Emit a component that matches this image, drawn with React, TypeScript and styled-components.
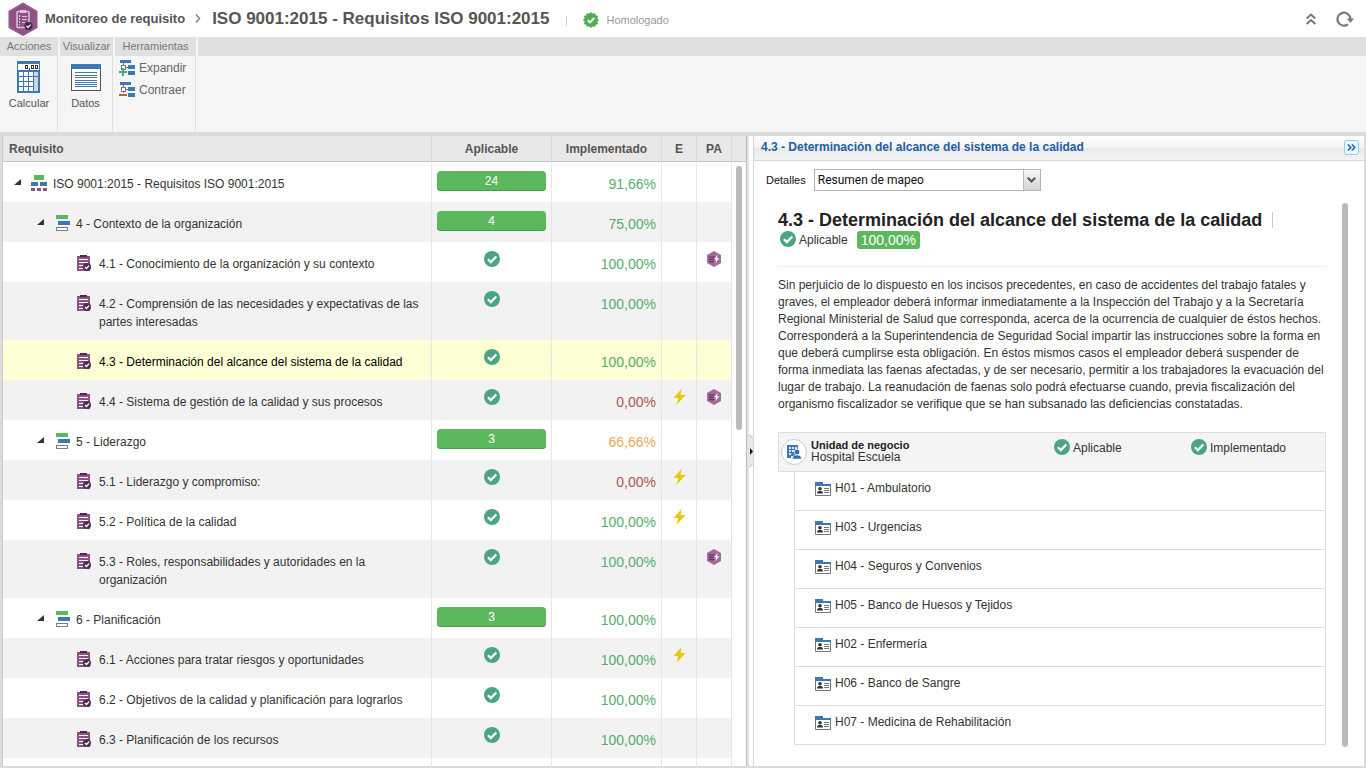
import React from 'react';
import styled, { createGlobalStyle, css } from 'styled-components';

const GlobalStyle = createGlobalStyle`
  *, *::before, *::after { box-sizing: border-box; }
  html, body { margin: 0; padding: 0; }
  body, button, select, table {
    font-family: "Liberation Sans", Arial, sans-serif;
    font-size: 12px;
    color: #333;
  }
  button { margin: 0; padding: 0; border: 0; background: none; cursor: pointer; }
  h1, h2, p, ul { margin: 0; padding: 0; }
  ul { list-style: none; }
  svg { display: block; flex: none; }
`;

/* ---------- Shell ---------- */

const Page = styled.div`
  display: flex;
  flex-direction: column;
  height: 100vh;
  background: #fff;
  overflow: hidden;
`;

const Workspace = styled.main`
  flex: 1;
  min-height: 0;
  display: grid;
  grid-template-columns: minmax(0, 745fr) 6px minmax(0, 611fr);
  grid-template-rows: minmax(0, 1fr);
  border: 2px solid #dcdcdc;
  border-top-width: 4px;
`;

/* ---------- Title bar ---------- */

const TitleBar = styled.header`
  flex: none;
  display: flex;
  align-items: center;
  height: 37px;
  padding: 0 12px 0 8px;
`;

const Crumb = styled.a`
  margin-left: 7px;
  font-size: 13px;
  font-weight: bold;
  color: #555;
  text-decoration: none;
`;

const CrumbArrow = styled.span`
  display: flex;
  margin: 0 11px 0 10px;
`;

const PageTitle = styled.h1`
  font-size: 17px;
  line-height: 20px;
  font-weight: bold;
  color: #555;
  white-space: nowrap;
`;

const Divider = styled.span`
  width: 1px;
  height: 10px;
  margin: 4px 16px 0 17px;
  background: #ccc;
`;

const Status = styled.span`
  display: flex;
  align-items: center;
  gap: 7px;
  padding-top: 3px;
  font-size: 11px;
  color: #999;
`;

const TitleActions = styled.div`
  display: flex;
  align-items: center;
  gap: 20px;
  margin-left: auto;
`;

/* ---------- Ribbon ---------- */

const Ribbon = styled.nav`
  flex: none;
  display: flex;
  height: 95px;
  background: #f5f5f5;
`;

const Group = styled.section<{ $width?: number }>`
  ${p => (p.$width ? css`width: ${p.$width}px;` : css`flex: 1;`)}
`;

const GroupTab = styled.div<{ $first?: boolean }>`
  height: 19px;
  line-height: 19px;
  border-left: ${p => (p.$first ? 0 : 2)}px solid #f5f5f5;
  font-size: 11px;
  color: #777;
  text-align: center;
  white-space: nowrap;
  background: #e0e0e0;
`;

const GroupBody = styled.div<{ $list?: boolean }>`
  display: flex;
  flex-direction: column;
  align-items: ${p => (p.$list ? 'flex-start' : 'center')};
  height: 76px;
  padding: ${p => (p.$list ? '1px 0 0 6px' : '5px 0 0 1px')};
  border-right: 1px solid #dedede;
`;

const BigButton = styled.button`
  display: flex;
  flex-direction: column;
  align-items: center;
  gap: 3px;
  font-size: 11px;
  line-height: 14px;
  color: #555;
`;

const ListButton = styled.button`
  display: flex;
  align-items: center;
  gap: 4px;
  height: 22px;
  line-height: 22px;
  color: #666;
`;

/* ---------- Requirement tree ---------- */

const TreePane = styled.section`
  display: flex;
  min-height: 0;
  overflow: hidden;
  border-left: 1px solid #ccc;
  border-right: 1px solid #bbb;
`;

const TreeMain = styled.div`
  flex: 1;
  min-width: 0;
`;

const TreeTable = styled.table`
  width: 100%;
  table-layout: fixed;
  border-collapse: separate;
  border-spacing: 0;
`;

const Th = styled.th`
  height: 26px;
  padding: 0;
  font-weight: bold;
  color: #555;
  background: #e8e8e8;
  border-right: 1px solid #dadada;
  border-bottom: 1px solid #c6c6c6;
  &:first-child { text-align: left; padding-left: 6px; }
`;

const Row = styled.tr<{ $selected?: boolean }>`
  color: #333;
  background: #fff;
  &:nth-child(even) { background: #f2f2f2; }
  ${p => p.$selected && css`&&& { background: #ffffd5; color: #000; }`}
`;

const Td = styled.td`
  padding: 9px 5px 0;
  vertical-align: top;
  border-right: 1px solid #e6e6e6;
  > svg { margin: 0 auto; }
`;

const NameCell = styled(Td)<{ $level: number }>`
  padding: 13px 6px 9px ${p => [11, 34, 74][p.$level]}px;
`;

const NodeLine = styled.div`
  display: flex;
  gap: 6px;
  line-height: 18px;
`;

const Toggle = styled.button`
  display: flex;
  align-items: flex-start;
  width: 11px;
  height: 16px;
  padding-top: 4px;
`;

const PercentCell = styled(Td)<{ $tone: string }>`
  padding: 13px 5px 0;
  font-size: 14px;
  line-height: 18px;
  text-align: right;
  color: ${p => p.$tone};
`;

const CountPill = styled.span`
  display: block;
  height: 20px;
  line-height: 20px;
  border-radius: 4px;
  box-shadow: inset 0 -1px #4a9a4a;
  background: #5cb85c;
  color: #fff;
  text-align: center;
`;

const TreeRail = styled.div`
  flex: none;
  width: 14px;
  display: flex;
  flex-direction: column;
`;

const RailHead = styled.div`
  height: 26px;
  background: #e8e8e8;
  border-bottom: 1px solid #c6c6c6;
`;

const Thumb = styled.div<{ $size: string }>`
  flex: none;
  width: 6px;
  height: ${p => p.$size};
  border-radius: 3px;
  background: #bababa;
`;

const RailTrack = styled.div`
  flex: 1;
  padding: 4px 0 0 4px;
`;

/* ---------- Splitter ---------- */

const Splitter = styled.div`
  display: flex;
  align-items: center;
  border-left: 2px solid #e4e4e4;
  background: #fff;
`;

/* ---------- Detail panel ---------- */

const DetailPane = styled.section`
  display: flex;
  flex-direction: column;
  min-height: 0;
  border-left: 1px solid #d5d5d5;
`;

const DetailHead = styled.header`
  flex: none;
  display: flex;
  align-items: center;
  justify-content: space-between;
  height: 25px;
  padding: 0 5px 2px 7px;
  border-bottom: 1px solid #d8d8d8;
  background: linear-gradient(#fff, #f3f3f3 50%, #e9e9e9 50%, #f3f3f3);
`;

const DetailTitle = styled.h2`
  font-size: 12px;
  line-height: 20px;
  font-weight: bold;
  color: #1f5fa8;
`;

const CollapseButton = styled.button`
  display: flex;
  align-items: center;
  justify-content: center;
  width: 15px;
  height: 15px;
  border: 1px solid #8ccbf5;
  border-radius: 3px;
  background: #eefaff;
`;

const Field = styled.div`
  flex: none;
  display: flex;
  align-items: center;
  gap: 8px;
  padding: 8px 0 0 12px;
`;

const FieldLabel = styled.label`
  font-size: 11px;
  color: #111;
`;

const SelectBox = styled.div`
  position: relative;
  width: 227px;
  height: 22px;
`;

const Select = styled.select`
  appearance: none;
  width: 100%;
  height: 100%;
  padding: 0 20px 0 3px;
  font-family: Roboto, "Open Sans", sans-serif;
  color: #111;
  border: 1px solid #b3b3b3;
  border-radius: 0;
  background: #fff;
`;

const SelectArrow = styled.span`
  position: absolute;
  top: 1px;
  right: 1px;
  bottom: 1px;
  display: flex;
  align-items: center;
  justify-content: center;
  width: 17px;
  border-left: 1px solid #bbb;
  background: linear-gradient(#f6f6f6, #d4d4d4);
  pointer-events: none;
`;

const DetailScroll = styled.div`
  flex: 1;
  display: flex;
  min-height: 0;
  gap: 16px;
  padding: 12px 16px 19px 24px;
`;

const DetailBody = styled.article`
  flex: 1;
  min-width: 0;
`;

const ItemTitle = styled.h2`
  display: flex;
  align-items: center;
  gap: 10px;
  padding-top: 7px;
  font-size: 18px;
  line-height: 20px;
  font-weight: bold;
  color: #222;
  &::after { content: ""; width: 1px; height: 16px; background: #ccc; }
`;

const Summary = styled.div`
  display: flex;
  align-items: center;
  height: 37px;
  padding: 0 0 16px 2px;
  border-bottom: 1px solid #eee;
`;

const Flag = styled.span`
  display: flex;
  align-items: flex-start;
  gap: 3px;
  line-height: 18px;
`;

const Badge = styled.span`
  margin-left: 9px;
  padding: 0 4px;
  font-size: 14px;
  line-height: 18px;
  border-radius: 3px;
  background: #5cb85c;
  color: #fff;
`;

const Description = styled.p`
  padding: 10px 0 19px;
  line-height: 17px;
`;

const UnitHead = styled.div`
  display: grid;
  grid-template-columns: minmax(0, 1fr) 137px 134px;
  align-items: start;
  height: 40px;
  padding: 6px 0 0 2px;
  border: 1px solid #ddd;
  background: #f4f4f4;
`;

const UnitName = styled.div`
  display: flex;
  gap: 4px;
  line-height: 12px;
  strong { display: block; font-size: 11px; color: #222; }
`;

const UnitIcon = styled.span`
  display: flex;
  align-items: center;
  justify-content: center;
  width: 26px;
  height: 26px;
  border: 1px solid #ccc;
  border-radius: 50%;
  background: #fff;
`;

const AreaList = styled.ul`
  margin-left: 16px;
  border: solid #ddd;
  border-width: 0 1px;
`;

const Area = styled.li`
  display: flex;
  gap: 4px;
  height: 39px;
  padding: 7px 0 0 20px;
  line-height: 18px;
  border-bottom: 1px solid #ddd;
  svg { margin-top: 3px; }
`;

/* ---------- Icons ---------- */

const LogoIcon = () => (
  <svg width="30" height="34" viewBox="0 0 30 34">
    <path d="M15 .5 29.500 9v17L15 34 .5 26V9z" fill="#8f5187" />
    <path d="M15 2 28 9.500v16L15 32.500 2 25.500v-16z" fill="none" stroke="#a5709c" strokeDasharray="1 1.500" />
    <rect x="9" y="9.500" width="12" height="16" rx="1" fill="#8f5187" stroke="#dcc6d9" strokeWidth="1.500" />
    <rect x="12" y="8" width="6" height="3" fill="#dcc6d9" />
    <path d="M14 14.500h5M14 17.500h5M14 20.500h3" stroke="#dcc6d9" />
    <path d="M11.500 13v10" stroke="#dcc6d9" strokeDasharray="2 1" />
    <circle cx="20.500" cy="24" r="4" fill="#472a48" />
    <path d="m18.500 24 1.500 1.500 2.700-2.900" stroke="#fff" strokeWidth="1.200" fill="none" />
  </svg>
);

const SealIcon = () => (
  <svg width="16" height="16" viewBox="0 0 16 16">
    <path
      d="m8 0 1.800 1.700L12.100.9l.6 2.400 2.400.6-.8 2.300L16 8l-1.700 1.800.8 2.300-2.400.6-.6 2.400-2.300-.8L8 16l-1.800-1.700-2.300.8-.6-2.400-2.400-.6.8-2.300L0 8l1.700-1.800L.9 3.900l2.400-.6.6-2.400 2.300.8z"
      fill="#4caf50"
    />
    <path d="m4.800 8.200 2.200 2.200 4.300-4.400" stroke="#fff" strokeWidth="2" fill="none" />
  </svg>
);

const CheckIcon = () => (
  <svg width="16" height="16" viewBox="0 0 16 16">
    <circle cx="8" cy="8" r="8" fill="#4ba583" />
    <path d="m3.900 8.200 2.900 2.900 5.500-5.700" stroke="#fff" strokeWidth="2.200" fill="none" />
  </svg>
);

const BoltIcon = () => (
  <svg width="13" height="16" viewBox="0 0 13 16">
    <path d="M8.500 0 .5 9h4.700L3.800 15.500 12.500 6H7.600z" fill="#e8c80c" />
  </svg>
);

const PlanIcon = () => (
  <svg width="14" height="16" viewBox="0 0 14 16">
    <path d="M7 0 14 4v8l-7 4-7-4V4z" fill="#a5689b" />
    <path d="M2 6h6M2 8.300h5M2 10.600h5" stroke="#5d3359" strokeWidth="1.200" />
    <path d="M10.500 3.800 7 8.500h2.200l-.9 3.700L12.300 7.300h-2.200z" fill="#fff" />
  </svg>
);

const RootIcon = () => (
  <svg width="16" height="16" viewBox="0 0 16 16" shapeRendering="crispEdges">
    <path d="M3 0h10v5H3z" fill="#5cb85c" />
    <path d="M0 7h7v4H0zM9 7h7v4H9z" fill="#3b78b5" />
    <path d="M0 13h4v3H0zM6 13h4v3H6zM12 13h4v3h-4z" fill="#8f5185" />
  </svg>
);

const ChapterIcon = () => (
  <svg width="16" height="16" viewBox="0 0 16 16" shapeRendering="crispEdges">
    <path d="M2 0h12v4H2z" fill="#5cb85c" />
    <path d="M4 6h12v4H4z" fill="#3b78b5" />
    <path d="M2 12h12v4H2z" fill="#7d7d7d" />
    <path d="M3 13h10v2H3z" fill="#fff" />
  </svg>
);

const RequirementIcon = () => (
  <svg width="16" height="16" viewBox="0 0 16 16">
    <path d="M0 1h13v15H0z" fill="#8f5185" />
    <path d="M3 0h7v2H3z" fill="#4a2c4a" />
    <path d="M2 4.500h9M2 7.500h9M2 10.500h5M2 13.500h4" stroke="#fff" />
    <circle cx="10" cy="12" r="4" fill="#4d2f50" />
    <path d="m8 12 1.500 1.500 2.600-2.900" stroke="#fff" strokeWidth="1.400" fill="none" />
  </svg>
);

const ToggleIcon = () => (
  <svg width="7" height="6" viewBox="0 0 7 6">
    <path d="M7 0v6H0z" fill="#333" />
  </svg>
);

const CalcIcon = () => (
  <svg width="24" height="32" viewBox="0 0 24 32" shapeRendering="crispEdges">
    <path d="M0 0h23v32H0z" fill="#3b78b5" />
    <path d="M1 3h21v6H1z" fill="#fff" />
    <path
      d="M8 4h3v4H8zM12 7h1v2h-1zM14 4h3v4h-3zM18 4h3v4h-3z"
      fill="#333"
    />
    <path d="M9 5h1v2H9zM15 5h1v2h-1zM19 5h1v2h-1z" fill="#fff" />
    {[11, 16, 21, 26].map(y => (
      <path key={y} d={`M2 ${y}h4v4H2zM7 ${y}h4v4H7zM12 ${y}h4v4h-4z`} fill="#fff" />
    ))}
    <path d="M17 11h4v4h-4zM17 16h4v14h-4z" fill="#cfd6dc" />
  </svg>
);

const DataIcon = () => (
  <svg width="30" height="32" viewBox="0 -3 30 32" shapeRendering="crispEdges">
    <path d="M0 0h30v27H0z" fill="#555" />
    <path d="M1 5h28v21H1z" fill="#fff" />
    <path d="M0 0h30v5H0z" fill="#3b78b5" />
    <path
      d="M4 8.500h22M4 11.500h22M4 13.500h22M4 16.500h22M4 18.500h22M4 20.500h22M4 22.500h22"
      stroke="#3b78b5"
    />
  </svg>
);

const BranchIcon = ({ expand }: { expand?: boolean }) => (
  <svg width="16" height="16" viewBox="0 0 16 16" shapeRendering="crispEdges">
    <path d="M1 0h11v3H1zM9 5h7v4H9zM9 11h7v4H9z" fill="#3b78b5" />
    <path d="M4.500 3v8M6 7.500h3" stroke="#777" fill="none" />
    <path d="M2.500 5.500h4v4h-4z" fill="#fff" stroke="#777" />
    {expand ? (
      <path d="M3 8h2v3h3v2H5v3H3v-3H0v-2h3z" fill="#4ba583" />
    ) : (
      <path d="M0 12h8v2H0z" fill="#b5652b" />
    )}
  </svg>
);

const BuildingIcon = () => (
  <svg width="16" height="16" viewBox="0 0 16 16">
    <path d="M1 1h11v13H1z" fill="#3b78b5" />
    <path
      d="M3 3h2v2H3zM6 3h2v2H6zM9 3h2v2H9zM3 6h2v2H3zM6 6h2v2H6zM3 9h2v2H3zM5 12h2v2H5z"
      fill="#d9e9f5"
    />
    <circle cx="11" cy="8" r="2.800" fill="#2a6bb0" stroke="#fff" strokeWidth=".8" />
    <path d="M6.500 15c0-3 1.800-4 4.500-4s4.500 1 4.500 4z" fill="#2a6bb0" stroke="#fff" strokeWidth=".6" />
  </svg>
);

const AreaIcon = () => (
  <svg width="16" height="14" viewBox="0 0 16 14">
    <path d="M.5 2.500h15v11H.5z" fill="#fff" stroke="#777" />
    <path d="M0 0h8v2h8v2H0z" fill="#3b78b5" />
    <circle cx="5" cy="6.800" r="1.800" fill="#333" />
    <path d="M2 11.500c0-2 1.200-2.500 3-2.500s3 .5 3 2.500z" fill="#333" />
    <path d="M9 6.500h5M9 8.500h5M9 10.500h5" stroke="#777" />
  </svg>
);

/* ---------- Data ---------- */

type Requirement = {
  level: 0 | 1 | 2;
  name: string;
  count?: number;
  done: string;
  tone?: string;
  event?: boolean;
  plan?: boolean;
  selected?: boolean;
};

const GREEN = '#57ad6b';
const RED = '#b0584c';
const AMBER = '#edaa55';

const requirements: Requirement[] = [
  { level: 0, name: 'ISO 9001:2015 - Requisitos ISO 9001:2015', count: 24, done: '91,66%' },
  { level: 1, name: '4 - Contexto de la organización', count: 4, done: '75,00%' },
  { level: 2, name: '4.1 - Conocimiento de la organización y su contexto', done: '100,00%', plan: true },
  { level: 2, name: '4.2 - Comprensión de las necesidades y expectativas de las partes interesadas', done: '100,00%' },
  { level: 2, name: '4.3 - Determinación del alcance del sistema de la calidad', done: '100,00%', selected: true },
  { level: 2, name: '4.4 - Sistema de gestión de la calidad y sus procesos', done: '0,00%', tone: RED, event: true, plan: true },
  { level: 1, name: '5 - Liderazgo', count: 3, done: '66,66%', tone: AMBER },
  { level: 2, name: '5.1 - Liderazgo y compromiso:', done: '0,00%', tone: RED, event: true },
  { level: 2, name: '5.2 - Política de la calidad', done: '100,00%', event: true },
  { level: 2, name: '5.3 - Roles, responsabilidades y autoridades en la organización', done: '100,00%', plan: true },
  { level: 1, name: '6 - Planificación', count: 3, done: '100,00%' },
  { level: 2, name: '6.1 - Acciones para tratar riesgos y oportunidades', done: '100,00%', event: true },
  { level: 2, name: '6.2 - Objetivos de la calidad y planificación para lograrlos', done: '100,00%' },
  { level: 2, name: '6.3 - Planificación de los recursos', done: '100,00%' },
];

const areas = [
  'H01 - Ambulatorio',
  'H03 - Urgencias',
  'H04 - Seguros y Convenios',
  'H05 - Banco de Huesos y Tejidos',
  'H02 - Enfermería',
  'H06 - Banco de Sangre',
  'H07 - Medicina de Rehabilitación',
];

const nodeIcons = [RootIcon, ChapterIcon, RequirementIcon];

const RequirementRow = ({ item }: { item: Requirement }) => {
  const NodeIcon = nodeIcons[item.level];
  return (
    <Row $selected={item.selected}>
      <NameCell $level={item.level}>
        <NodeLine>
          {item.level < 2 && (
            <Toggle aria-label="Contraer nivel">
              <ToggleIcon />
            </Toggle>
          )}
          <NodeIcon />
          <span>{item.name}</span>
        </NodeLine>
      </NameCell>
      <Td>{item.count ? <CountPill>{item.count}</CountPill> : <CheckIcon />}</Td>
      <PercentCell $tone={item.tone ?? GREEN}>{item.done}</PercentCell>
      <Td>{item.event && <BoltIcon />}</Td>
      <Td>{item.plan && <PlanIcon />}</Td>
    </Row>
  );
};

export default function App() {
  return (
    <Page>
      <GlobalStyle />
      <TitleBar>
        <LogoIcon />
        <Crumb href="#monitoreo">Monitoreo de requisito</Crumb>
        <CrumbArrow>
          <svg width="6" height="9" viewBox="0 0 6 9">
            <path d="m1 .5 3.500 4L1 8.500" fill="none" stroke="#888" strokeWidth="1.600" />
          </svg>
        </CrumbArrow>
        <PageTitle>ISO 9001:2015 - Requisitos ISO 9001:2015</PageTitle>
        <Divider />
        <Status>
          <SealIcon />
          Homologado
        </Status>
        <TitleActions>
          <button aria-label="Ocultar barra">
            <svg width="10" height="12" viewBox="0 0 10 12">
              <path d="M.7 5.500 5 1.500l4.300 4M.7 11 5 7l4.300 4" fill="none" stroke="#777" strokeWidth="2" />
            </svg>
          </button>
          <button aria-label="Actualizar">
            <svg width="18" height="16" viewBox="0 0 18 16">
              <path d="M12 13.300A6.500 6.500 0 1 1 14.500 8" fill="none" stroke="#7a7a7a" strokeWidth="2.200" />
              <path d="M10.800 7.500H18L14.400 12z" fill="#7a7a7a" />
            </svg>
          </button>
        </TitleActions>
      </TitleBar>

      <Ribbon>
        <Group $width={58}>
          <GroupTab $first>Acciones</GroupTab>
          <GroupBody>
            <BigButton>
              <CalcIcon />
              Calcular
            </BigButton>
          </GroupBody>
        </Group>
        <Group $width={55}>
          <GroupTab>Visualizar</GroupTab>
          <GroupBody>
            <BigButton>
              <DataIcon />
              Datos
            </BigButton>
          </GroupBody>
        </Group>
        <Group $width={83}>
          <GroupTab>Herramientas</GroupTab>
          <GroupBody $list>
            <ListButton>
              <BranchIcon expand />
              Expandir
            </ListButton>
            <ListButton>
              <BranchIcon />
              Contraer
            </ListButton>
          </GroupBody>
        </Group>
        <Group>
          <GroupTab />
        </Group>
      </Ribbon>

      <Workspace>
        <TreePane>
          <TreeMain>
            <TreeTable>
              <colgroup>
                <col />
                <col width="120" />
                <col width="110" />
                <col width="35" />
                <col width="35" />
              </colgroup>
              <thead>
                <tr>
                  <Th>Requisito</Th>
                  <Th>Aplicable</Th>
                  <Th>Implementado</Th>
                  <Th>E</Th>
                  <Th>PA</Th>
                </tr>
              </thead>
              <tbody>
                {requirements.map(item => (
                  <RequirementRow key={item.name} item={item} />
                ))}
                <Row>
                  <Td />
                  <Td />
                  <Td />
                  <Td />
                  <Td />
                </Row>
              </tbody>
            </TreeTable>
          </TreeMain>
          <TreeRail>
            <RailHead />
            <RailTrack>
              <Thumb $size="44%" />
            </RailTrack>
          </TreeRail>
        </TreePane>

        <Splitter>
          <button aria-label="Mover panel">
            <svg width="4" height="34" viewBox="0 0 4 34">
              <path d="M0 0 4 4v26l-4 4z" fill="#e8e8e8" />
              <path d="m0 .5 4 4M0 33.500l4-4" stroke="#bbb" />
              <path d="m1 14 3 3.500L1 21z" fill="#111" />
            </svg>
          </button>
        </Splitter>

        <DetailPane>
          <DetailHead>
            <DetailTitle>4.3 - Determinación del alcance del sistema de la calidad</DetailTitle>
            <CollapseButton aria-label="Contraer panel">
              <svg width="9" height="7" viewBox="0 0 9 7">
                <path d="m.8.500 3 3-3 3M4.800.500l3 3-3 3" fill="none" stroke="#2b66a8" strokeWidth="1.600" />
              </svg>
            </CollapseButton>
          </DetailHead>
          <Field>
            <FieldLabel htmlFor="detalles">Detalles</FieldLabel>
            <SelectBox>
              <Select id="detalles">
                <option>Resumen de mapeo</option>
              </Select>
              <SelectArrow>
                <svg width="9" height="6" viewBox="0 0 9 6">
                  <path d="m.8.800 3.700 3.700L8.200.8" fill="none" stroke="#555" strokeWidth="2" />
                </svg>
              </SelectArrow>
            </SelectBox>
          </Field>
          <DetailScroll>
            <DetailBody>
              <ItemTitle>4.3 - Determinación del alcance del sistema de la calidad</ItemTitle>
              <Summary>
                <Flag>
                  <CheckIcon />
                  Aplicable
                </Flag>
                <Badge>100,00%</Badge>
              </Summary>
              <Description>
                Sin perjuicio de lo dispuesto en los incisos precedentes, en caso de accidentes del trabajo fatales y
                graves, el empleador deberá informar inmediatamente a la Inspección del Trabajo y a la Secretaría
                Regional Ministerial de Salud que corresponda, acerca de la ocurrencia de cualquier de éstos hechos.
                Corresponderá a la Superintendencia de Seguridad Social impartir las instrucciones sobre la forma en
                que deberá cumplirse esta obligación. En éstos mismos casos el empleador deberá suspender de forma
                inmediata las faenas afectadas, y de ser necesario, permitir a los trabajadores la evacuación del
                lugar de trabajo. La reanudación de faenas solo podrá efectuarse cuando, previa fiscalización del
                organismo fiscalizador se verifique que se han subsanado las deficiencias constatadas.
              </Description>
              <UnitHead>
                <UnitName>
                  <UnitIcon>
                    <BuildingIcon />
                  </UnitIcon>
                  <span>
                    <strong>Unidad de negocio</strong>
                    Hospital Escuela
                  </span>
                </UnitName>
                <Flag>
                  <CheckIcon />
                  Aplicable
                </Flag>
                <Flag>
                  <CheckIcon />
                  Implementado
                </Flag>
              </UnitHead>
              <AreaList>
                {areas.map(area => (
                  <Area key={area}>
                    <AreaIcon />
                    {area}
                  </Area>
                ))}
              </AreaList>
            </DetailBody>
            <Thumb $size="100%" />
          </DetailScroll>
        </DetailPane>
      </Workspace>
    </Page>
  );
}
